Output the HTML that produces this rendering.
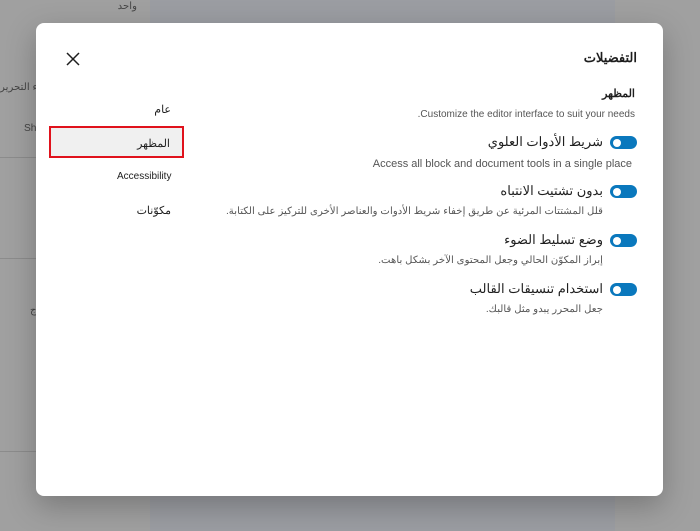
<!DOCTYPE html>
<html><head><meta charset="utf-8"><style>
*{margin:0;padding:0;box-sizing:border-box}
body{width:700px;height:531px;overflow:hidden;background:#a0a0a0;position:relative;font-family:"Liberation Sans","Noto Sans CJK SC",sans-serif;}
.a{position:absolute}
.mid{left:150px;top:0;width:465px;height:531px;background:#9b9da2}
.line{position:absolute;left:0;width:150px;height:1px;background:#8c8c8c}
.modal{left:36px;top:23px;width:627px;height:473px;background:#fff;border-radius:8px;box-shadow:0 10px 30px rgba(0,0,0,.25)}
.t{position:absolute;direction:rtl;white-space:nowrap;color:#1e1e1e}
.tog{position:absolute;left:610px;width:27px;height:13px;border-radius:7px;background:#0a78bd}
.tog:after{content:"";position:absolute;left:3px;top:2.5px;width:8px;height:8px;border-radius:50%;background:#fff}
.d{font-size:10.2px;color:#555}
.h{font-size:13px}
</style></head><body>
<div class="a mid"></div>
<div class="t d" style="right:563px;top:1px;color:#444">واحد</div>
<div class="t d" style="left:0;top:82px;color:#444;direction:ltr">ناء التحرير</div>
<div class="t d" style="left:24px;top:123px;color:#444;direction:ltr">Sh</div>
<div class="t d" style="left:30px;top:305px;color:#444;direction:ltr">ج</div>
<div class="line" style="top:157px"></div>
<div class="line" style="top:258px"></div>
<div class="line" style="top:451px"></div>
<div class="a modal"></div>
<svg class="a" style="left:66px;top:52px" width="14" height="14" viewBox="0 0 14 14"><path d="M1 1L13 13M13 1L1 13" stroke="#1e1e1e" stroke-width="1.5"/></svg>
<div class="t" style="right:63px;top:50px;font-size:13px;font-weight:bold">التفضيلات</div>
<div class="t" style="right:529px;top:103px;font-size:11px">عام</div>
<div class="a" style="left:49px;top:126px;width:135px;height:32px;background:#f0f0f0;border:2px solid #e0121c"></div>
<div class="t" style="right:530px;top:137px;font-size:11px">المظهر</div>
<div class="t" style="left:117px;top:171px;font-size:10px;direction:ltr">Accessibility</div>
<div class="t" style="right:529px;top:204px;font-size:11px">مكوّنات</div>
<div class="t" style="right:65px;top:87px;font-size:11px;font-weight:bold">المظهر</div>
<div class="t d" style="right:65px;top:109px;direction:ltr;font-size:10px">.Customize the editor interface to suit your needs</div>
<div class="tog" style="top:136px"></div>
<div class="t h" style="right:97px;top:134px">شريط الأدوات العلوي</div>
<div class="t d" style="right:68px;top:158px;direction:ltr;font-size:11px">Access all block and document tools in a single place</div>
<div class="tog" style="top:185px"></div>
<div class="t h" style="right:97px;top:183px">بدون تشتيت الانتباه</div>
<div class="t d" style="right:97px;top:206px">قلل المشتتات المرئية عن طريق إخفاء شريط الأدوات والعناصر الأخرى للتركيز على الكتابة.</div>
<div class="tog" style="top:234px"></div>
<div class="t h" style="right:97px;top:232px">وضع تسليط الضوء</div>
<div class="t d" style="right:97px;top:255px">إبراز المكوّن الحالي وجعل المحتوى الآخر بشكل باهت.</div>
<div class="tog" style="top:283px"></div>
<div class="t h" style="right:97px;top:281px">استخدام تنسيقات القالب</div>
<div class="t d" style="right:97px;top:304px">جعل المحرر يبدو مثل قالبك.</div>
</body></html>
